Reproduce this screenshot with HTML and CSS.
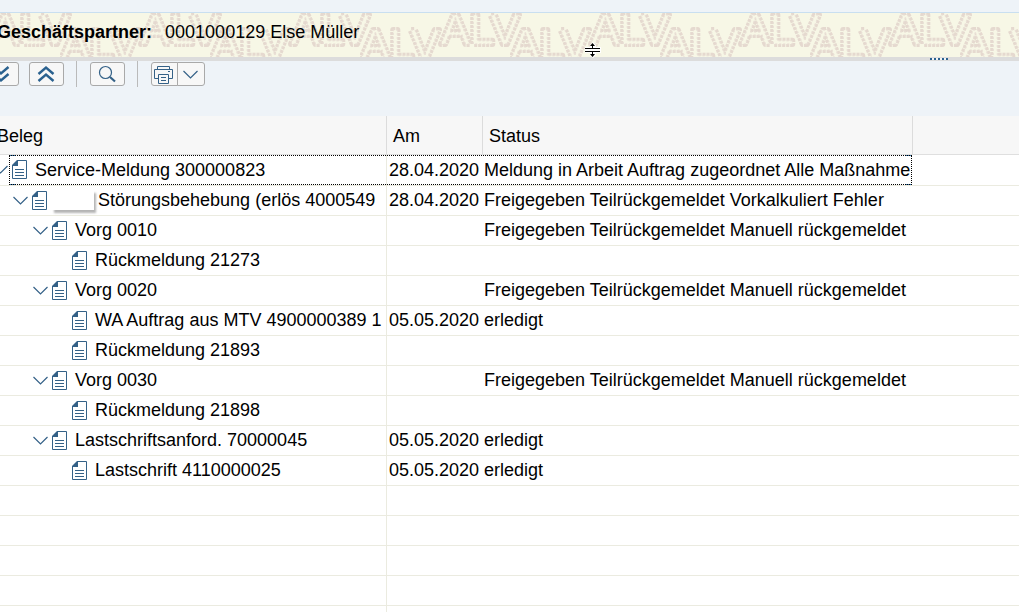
FILE: index.html
```html
<!DOCTYPE html>
<html lang="de">
<head>
<meta charset="utf-8">
<title>Belegfluss</title>
<link rel="stylesheet" href="styles.css">
</head>
<body>
<svg class="symbols" aria-hidden="true">
  <symbol id="doc" viewBox="0 0 15 19">
    <path d="M5.5.5H14.5V18.500H.5V5.500z" fill="#fff" stroke="#346187"/>
    <path d="M0 6V5L5 0H6V6z" fill="#346187"/>
    <path d="M3 9.500H12M3 12.500H12M3 15.500H12" stroke="#346187"/>
  </symbol>
  <symbol id="chev" viewBox="0 0 15 9"><path d="M.5 1L7.500 8L14.500 1" fill="none" stroke="#346187" stroke-width="1.200"/></symbol>
</svg>
<header class="banner">
  <svg class="watermark" aria-hidden="true">
    <defs>
      <pattern id="alv" x="60" y="0" width="150" height="44" patternUnits="userSpaceOnUse">
        <g class="mark">
          <text x="1" y="46">ALV</text>
          <text x="81" y="31">ALV</text>
          <text x="-69" y="31">ALV</text>
        </g>
        <g class="mark-core">
          <text x="1" y="46">ALV</text>
          <text x="81" y="31">ALV</text>
          <text x="-69" y="31">ALV</text>
        </g>
      </pattern>
    </defs>
    <rect width="100%" height="44" fill="url(#alv)"/>
  </svg>
  <h1 class="partner"><b>Geschäftspartner:</b><span>0001000129 Else Müller</span></h1>
  <svg class="cursor" width="16" height="14" viewBox="0 0 16 14" aria-hidden="true">
    <path d="M0 4H16V10H0zM5 2L8-1L11 2V12L8 15L5 12z" fill="#fff"/>
    <path d="M0 5.500H15M0 8.500H15M7.500 1V5M7.500 9V13" stroke="#000"/>
    <path d="M5 3L7.500 0L10 3zM5 11L7.500 14L10 11z"/>
  </svg>
  <i class="grip"></i>
</header>
<nav class="toolbar">
  <button class="btn" aria-label="Alles expandieren"><svg width="18" height="18" viewBox="0 0 18 18"><path d="M1.500 2L9 8.500L16.500 2M1.500 9L9 15.500L16.500 9" fill="none" stroke="#2a618f" stroke-width="2.400"/></svg></button>
  <button class="btn" aria-label="Alles komprimieren"><svg width="18" height="18" viewBox="0 0 18 18"><path d="M1.500 9L9 2.500L16.500 9M1.500 16L9 9.500L16.500 16" fill="none" stroke="#2a618f" stroke-width="2.400"/></svg></button>
  <i class="sep"></i>
  <button class="btn" aria-label="Suchen"><svg width="18" height="18" viewBox="0 0 18 18"><circle cx="7.500" cy="7.500" r="6" fill="none" stroke="#346187" stroke-width="1.200"/><path d="M12 12L17 16.500" stroke="#346187" stroke-width="2.200"/></svg></button>
  <i class="sep"></i>
  <span class="split">
    <button class="btn print" aria-label="Drucken"><svg width="19" height="19" viewBox="0 0 19 19" fill="none" stroke="#346187"><path d="M3.500 4.500V1.500H15.500V4.500M4 13.500H.5V4.500H18.500V13.500H15M4.500 9.500H14.500V18.500H4.500zM7 12.500H12M7 15.500H12M14 6.500H16"/></svg></button>
    <button class="btn more" aria-label="Druckoptionen"><svg width="15" height="9"><use href="#chev"/></svg></button>
  </span>
</nav>
<table class="tree">
  <colgroup><col class="c-doc"><col class="c-date"><col class="c-status"><col></colgroup>
  <thead><tr><th class="first">Beleg</th><th>Am</th><th>Status</th><th class="rest"></th></tr></thead>
  <tbody>
    <tr class="focused"><td><div class="node l0"><svg class="chev"><use href="#chev"/></svg><svg class="doc"><use href="#doc"/></svg>Service-Meldung 300000823</div><i class="focus"></i></td><td>28.04.2020</td><td>Meldung in Arbeit Auftrag zugeordnet Alle Maßnahme</td><td></td></tr>
    <tr><td><div class="node l1"><svg class="chev"><use href="#chev"/></svg><svg class="doc"><use href="#doc"/></svg><i class="blank"></i>Störungsbehebung (erlös 4000549</div></td><td>28.04.2020</td><td>Freigegeben Teilrückgemeldet Vorkalkuliert Fehler</td><td></td></tr>
    <tr><td><div class="node l2"><svg class="chev"><use href="#chev"/></svg><svg class="doc"><use href="#doc"/></svg>Vorg 0010</div></td><td></td><td>Freigegeben Teilrückgemeldet Manuell rückgemeldet</td><td></td></tr>
    <tr><td><div class="node l3"><svg class="doc"><use href="#doc"/></svg>Rückmeldung 21273</div></td><td></td><td></td><td></td></tr>
    <tr><td><div class="node l2"><svg class="chev"><use href="#chev"/></svg><svg class="doc"><use href="#doc"/></svg>Vorg 0020</div></td><td></td><td>Freigegeben Teilrückgemeldet Manuell rückgemeldet</td><td></td></tr>
    <tr><td><div class="node l3"><svg class="doc"><use href="#doc"/></svg>WA Auftrag aus MTV 4900000389 1</div></td><td>05.05.2020</td><td>erledigt</td><td></td></tr>
    <tr><td><div class="node l3"><svg class="doc"><use href="#doc"/></svg>Rückmeldung 21893</div></td><td></td><td></td><td></td></tr>
    <tr><td><div class="node l2"><svg class="chev"><use href="#chev"/></svg><svg class="doc"><use href="#doc"/></svg>Vorg 0030</div></td><td></td><td>Freigegeben Teilrückgemeldet Manuell rückgemeldet</td><td></td></tr>
    <tr><td><div class="node l3"><svg class="doc"><use href="#doc"/></svg>Rückmeldung 21898</div></td><td></td><td></td><td></td></tr>
    <tr><td><div class="node l2"><svg class="chev"><use href="#chev"/></svg><svg class="doc"><use href="#doc"/></svg>Lastschriftsanford. 70000045</div></td><td>05.05.2020</td><td>erledigt</td><td></td></tr>
    <tr><td><div class="node l3"><svg class="doc"><use href="#doc"/></svg>Lastschrift 4110000025</div></td><td>05.05.2020</td><td>erledigt</td><td></td></tr>
    <tr><td></td><td></td><td></td><td></td></tr>
    <tr><td></td><td></td><td></td><td></td></tr>
    <tr><td></td><td></td><td></td><td></td></tr>
    <tr><td></td><td></td><td></td><td></td></tr>
    <tr><td></td><td></td><td></td><td></td></tr>
  </tbody>
</table>
</body>
</html>
```
FILE: styles.css
```css
* { box-sizing: border-box; }
html { height: 100%; overflow: hidden; }
body {
  margin: 0;
  padding-top: 12px;
  height: 100%;
  overflow: hidden;
  background: linear-gradient(#eef3f8 116px, #fff 116px);
  color: #000;
  font-family: "Liberation Sans", Arial, sans-serif;
  font-size: 18px;
  line-height: 20px;
}
.symbols { position: absolute; width: 0; height: 0; }

.banner {
  position: relative;
  height: 49px;
  padding-top: 9px;
  background: #f7f7e6;
  border-top: 1px solid #c9dff0;
  border-bottom: 4px solid #dcdcdc;
}
.watermark { position: absolute; inset: 0; width: 100%; height: 44px; }
.mark, .mark-core { font-size: 43px; font-weight: 400; }
.mark { fill: none; stroke: #e5d9cf; stroke-width: 6px; stroke-linejoin: round; stroke-dasharray: 3px 1px; }
.mark-core { fill: #f7f7e6; stroke: #e9dfd5; stroke-width: 1px; stroke-dasharray: 2px 2px; }
.partner {
  position: relative;
  display: flex;
  gap: 13px;
  margin: 0 0 0 -3px;
  font-size: 18px;
  font-weight: 400;
}
.cursor { position: absolute; left: 585px; top: 30px; overflow: visible; }
.grip {
  position: absolute;
  left: 930px;
  top: 45px;
  width: 18px;
  height: 2px;
  background: repeating-linear-gradient(90deg, #2a618f 0 2px, #f4f4f4 2px 4px);
}

.toolbar { display: flex; align-items: center; height: 55px; padding-bottom: 29px; margin-left: -16px; }
.btn {
  display: flex;
  align-items: center;
  justify-content: center;
  width: 35px;
  height: 24px;
  padding: 0 2px 0 0;
  background: #f7f7f7;
  border: 1px solid #a9a9a9;
  border-radius: 3px;
}
.btn + .btn { margin-left: 10px; }
.sep { width: 1px; height: 26px; margin: 0 13px 0 12px; background: #bababa; }
.split { display: flex; }
.print { width: 27px; border-radius: 3px 0 0 3px; }
.split .more { width: 28px; margin-left: -1px; border-radius: 0 3px 3px 0; }

.tree { width: 100%; border-collapse: separate; border-spacing: 0; table-layout: fixed; background: #fff; }
.c-doc { width: 387px; }
.c-date { width: 96px; }
.c-status { width: 430px; }
th {
  height: 39px;
  padding: 1px 0 0 6px;
  background: #f7f7f7;
  border-right: 1px solid #dcdcdc;
  border-bottom: 1px solid #dfdfdf;
  font-weight: 400;
  text-align: left;
}
th.first { padding: 1px 0 0; text-indent: -3px; }
th.rest { border-right: 0; }
td { height: 30px; padding: 0 0 1px; border-bottom: 1px solid #ebebe0; white-space: nowrap; }
.focused td { height: 31px; }
td:first-child { border-right: 1px solid #ebebe0; }
td:nth-child(2) { padding-left: 2px; }
td:nth-child(3) { padding-left: 1px; }
.focused { position: relative; }
.focus {
  position: absolute;
  left: 9px;
  top: 0;
  width: 903px;
  height: 30px;
  border: 1px dotted #000;
  background:
    linear-gradient(#3a7ab0, #3a7ab0) 0 0 / 7px 1px no-repeat border-box,
    linear-gradient(#3a7ab0, #3a7ab0) 100% 0 / 7px 1px no-repeat border-box,
    linear-gradient(#3a7ab0, #3a7ab0) 0 100% / 7px 1px no-repeat border-box,
    linear-gradient(#3a7ab0, #3a7ab0) 100% 100% / 7px 1px no-repeat border-box;
}
.node { display: flex; align-items: center; height: 28px; }
.chev { width: 15px; height: 9px; margin-right: 4px; }
.doc { width: 15px; height: 19px; margin-right: 8px; }
.l0 { margin-left: -7px; }
.l1 { padding-left: 13px; }
.l2 { padding-left: 33px; }
.l3 { padding-left: 72px; }
.blank {
  width: 42px;
  height: 20px;
  margin-left: -3px;
  margin-right: 4px;
  background: #fff;
  box-shadow: 2px 3px 2px #b4b4b4;
}
```
